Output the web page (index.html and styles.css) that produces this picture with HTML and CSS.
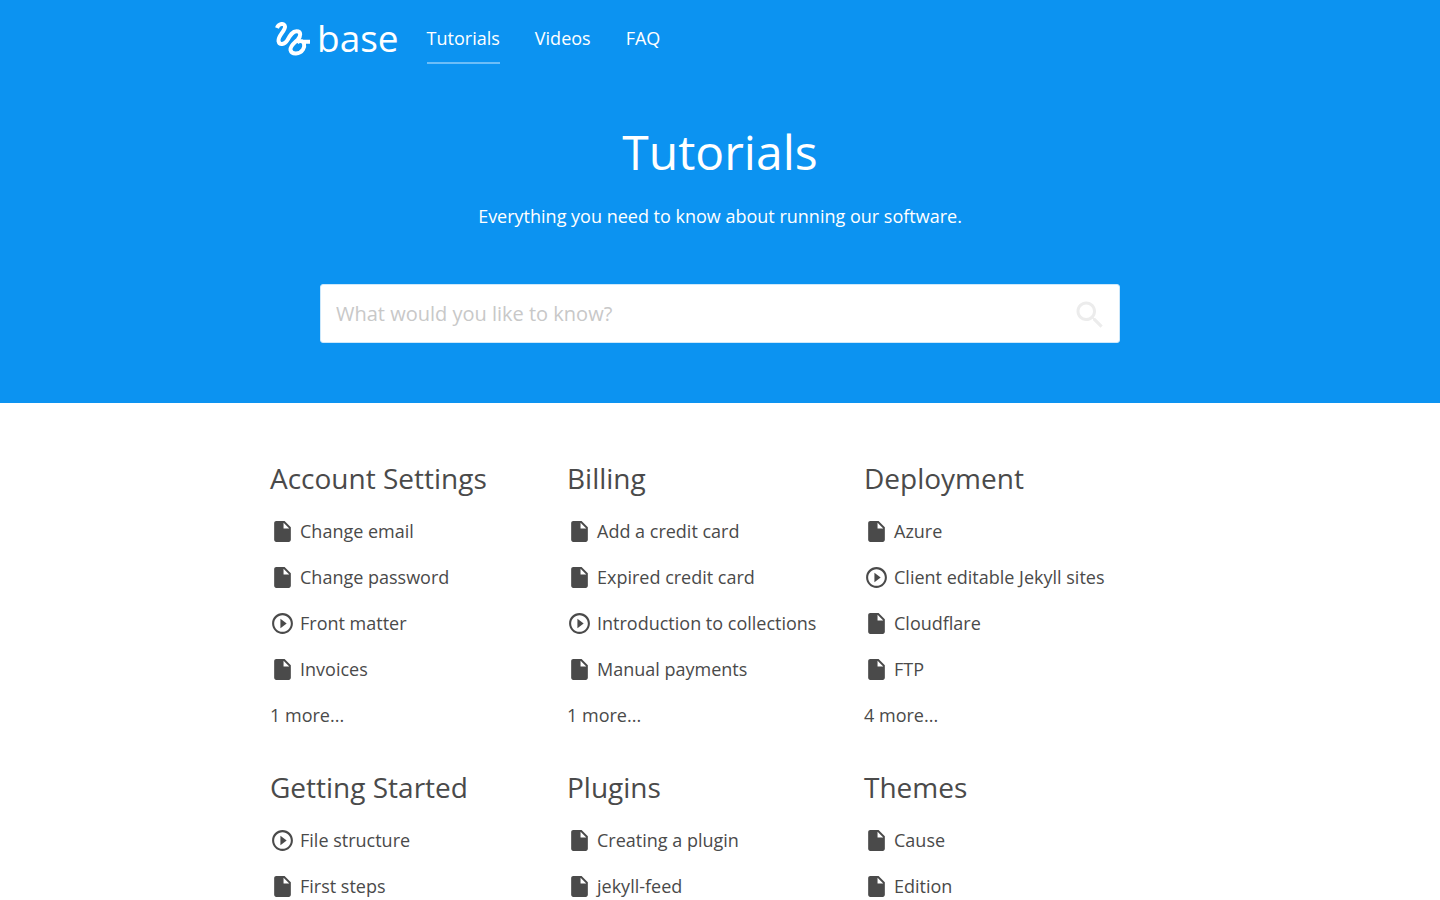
FILE: index.html
```html
<!DOCTYPE html>
<html lang="en">
<head>
<meta charset="utf-8">
<meta name="viewport" content="width=device-width, initial-scale=1">
<title>Tutorials | Base</title>
<link rel="stylesheet" href="styles.css">
</head>
<body>
<svg class="sprite" aria-hidden="true">
  <symbol id="doc" viewBox="0 0 24 24"><path d="M6 2c-1.100 0-2 .9-2 2v16c0 1.100.9 2 2 2h12c1.100 0 2-.9 2-2V8l-6-6H6zm7 1.500L18.500 9H13z"/></symbol>
  <symbol id="play" viewBox="0 0 24 24"><path d="M10 16.500l6-4.500-6-4.500v9zM12 2C6.480 2 2 6.480 2 12s4.480 10 10 10 10-4.480 10-10S17.520 2 12 2zm0 18c-4.410 0-8-3.590-8-8s3.590-8 8-8 8 3.590 8 8-3.590 8-8 8z"/></symbol>
</svg>
<header class="hero">
  <nav class="container nav" aria-label="Main">
    <a class="logo" href="#">
      <svg class="logo-mark" viewBox="0 0 36 36" aria-hidden="true"><path d="M2 8C3.500 3.500 9.500 2.500 10 6.500C10.500 10.500 2.800 16 3.500 21C4.500 25.500 9.500 25 12.500 20C15 15.500 17.500 11.200 21.500 11.200C26.500 11.200 26 16.500 22.500 20C19 23.200 15 26 15.500 30C16.700 35 24.800 34.500 28 29.500C30.500 25.500 29 21 25.500 21C24 21 23 21.500 22 22.500M27 21.800H35"/></svg>
      <span>base</span>
    </a>
    <a class="nav-link active" href="#" aria-current="page">Tutorials</a>
    <a class="nav-link" href="#">Videos</a>
    <a class="nav-link" href="#">FAQ</a>
  </nav>
  <div class="intro">
    <h1>Tutorials</h1>
    <p>Everything you need to know about running our software.</p>
  </div>
  <form class="search" role="search">
    <input class="search-input" type="search" aria-label="Search" placeholder="What would you like to know?">
    <button class="search-button" type="submit" aria-label="Submit search"><svg viewBox="0 0 24 24" aria-hidden="true"><path d="M15.500 14h-.79l-.28-.27C15.410 12.590 16 11.110 16 9.500 16 5.910 13.090 3 9.500 3S3 5.910 3 9.500 5.910 16 9.500 16c1.610 0 3.090-.59 4.230-1.570l.27.28v.79l5 4.990L20.490 19l-4.990-5zm-6 0C7.010 14 5 11.990 5 9.500S7.010 5 9.500 5 14 7.010 14 9.500 11.990 14 9.500 14z"/></svg></button>
  </form>
</header>
<main class="container topics">
  <section><h2>Account Settings</h2>
    <ul>
      <li><a href="#"><svg><use href="#doc"/></svg>Change email</a></li>
      <li><a href="#"><svg><use href="#doc"/></svg>Change password</a></li>
      <li><a href="#"><svg><use href="#play"/></svg>Front matter</a></li>
      <li><a href="#"><svg><use href="#doc"/></svg>Invoices</a></li>
      <li><a href="#">1 more...</a></li>
    </ul></section>
  <section><h2>Billing</h2>
    <ul>
      <li><a href="#"><svg><use href="#doc"/></svg>Add a credit card</a></li>
      <li><a href="#"><svg><use href="#doc"/></svg>Expired credit card</a></li>
      <li><a href="#"><svg><use href="#play"/></svg>Introduction to collections</a></li>
      <li><a href="#"><svg><use href="#doc"/></svg>Manual payments</a></li>
      <li><a href="#">1 more...</a></li>
    </ul></section>
  <section><h2>Deployment</h2>
    <ul>
      <li><a href="#"><svg><use href="#doc"/></svg>Azure</a></li>
      <li><a href="#"><svg><use href="#play"/></svg>Client editable Jekyll sites</a></li>
      <li><a href="#"><svg><use href="#doc"/></svg>Cloudflare</a></li>
      <li><a href="#"><svg><use href="#doc"/></svg>FTP</a></li>
      <li><a href="#">4 more...</a></li>
    </ul></section>
  <section><h2>Getting Started</h2>
    <ul>
      <li><a href="#"><svg><use href="#play"/></svg>File structure</a></li>
      <li><a href="#"><svg><use href="#doc"/></svg>First steps</a></li>
    </ul></section>
  <section><h2>Plugins</h2>
    <ul>
      <li><a href="#"><svg><use href="#doc"/></svg>Creating a plugin</a></li>
      <li><a href="#"><svg><use href="#doc"/></svg>jekyll-feed</a></li>
    </ul></section>
  <section><h2>Themes</h2>
    <ul>
      <li><a href="#"><svg><use href="#doc"/></svg>Cause</a></li>
      <li><a href="#"><svg><use href="#doc"/></svg>Edition</a></li>
    </ul></section>
</main>
</body>
</html>
```
FILE: styles.css
```css
* { box-sizing: border-box; }
body {
  margin: 0;
  background: #fff;
  color: #4a4a4a;
  font: 18px/26px "Open Sans", sans-serif;
}
a { color: inherit; text-decoration: none; }
h1, h2, p, ul { margin: 0; padding: 0; font-weight: 400; }
ul { list-style: none; }
.sprite { position: absolute; width: 0; height: 0; }
.container { max-width: 900px; margin: 0 auto; }
.hero { background: #0c93f1; color: #fff; padding-bottom: 60px; }
.nav { display: flex; align-items: center; gap: 35px; height: 76px; }
.logo { display: flex; align-items: center; gap: 6px; margin: 0 -7px 0 5px; font-size: 37px; line-height: 52px; }
.logo-mark { width: 36px; height: 36px; fill: none; stroke: #fff; stroke-width: 4; overflow: visible; }
.nav-link { padding: 12px 0 11px; border-bottom: 2px solid transparent; }
.nav-link.active { border-bottom-color: #6dbef8; }
.intro { padding: 41px 20px 0; text-align: center; }
.intro h1 { font-size: 48px; line-height: 70px; }
.intro p { margin-top: 16px; }
.search { position: relative; max-width: 800px; margin: 55px auto 0; }
.search-input {
  display: block;
  width: 100%;
  height: 59px;
  padding: 0 64px 0 15px;
  border: 1px solid #cde8fb;
  border-radius: 3px;
  background: #fff;
  color: #4a4a4a;
  font: 20px "Open Sans", sans-serif;
  appearance: none;
}
.search-input::placeholder { color: #c8c8c8; opacity: 1; }
.search-button { position: absolute; top: 13px; right: 12px; width: 36px; height: 36px; padding: 0; border: 0; background: none; }
.search-button svg { display: block; width: 36px; height: 36px; fill: #ececec; }
.topics { display: grid; grid-template-columns: repeat(3, 33%); row-gap: 39px; padding: 55px 0 0; }
.topics h2 { margin-bottom: 20px; font-size: 28px; line-height: 40px; }
.topics li { margin-bottom: 20px; }
.topics li:last-child { margin-bottom: 0; }
.topics a { display: flex; align-items: center; gap: 5px; }
.topics svg { flex: none; width: 25px; height: 25px; fill: #4a4a4a; }
```
